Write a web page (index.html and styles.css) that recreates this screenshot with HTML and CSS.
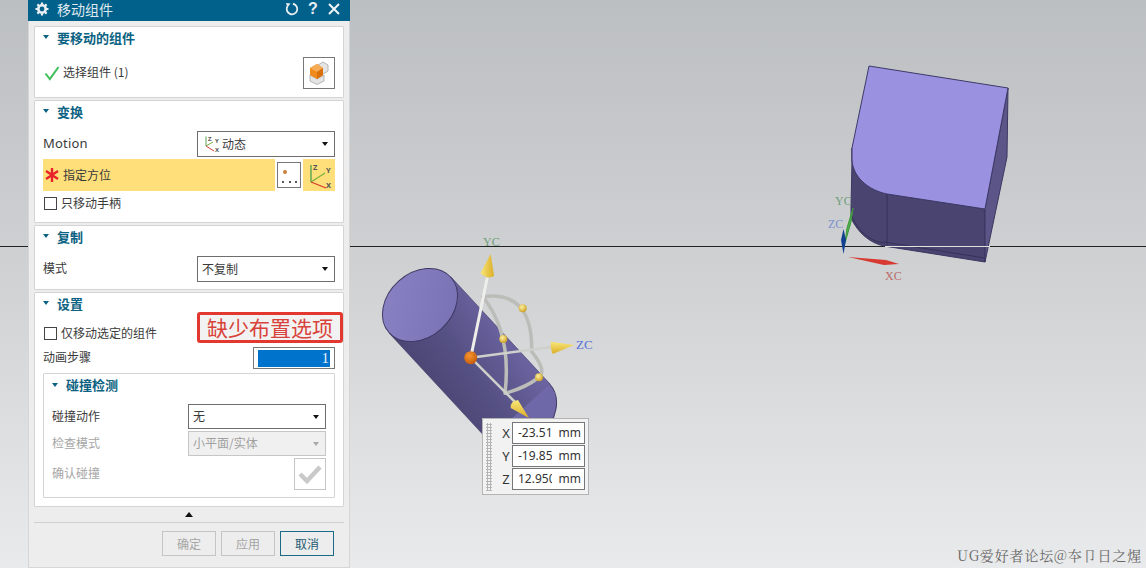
FILE: index.html
```html
<!DOCTYPE html>
<html lang="zh-CN">
<head>
<meta charset="utf-8">
<title>移动组件</title>
<link rel="stylesheet" href="styles.css">
</head>
<body>
<main class="stage">
  <svg class="scene" width="1146" height="568" viewBox="0 0 1146 568">
    <defs>
      <linearGradient id="cyl" gradientUnits="userSpaceOnUse" x1="410" y1="400" x2="520" y2="320">
        <stop offset="0" stop-color="#45406a"/><stop offset="0.5" stop-color="#565184"/><stop offset="1" stop-color="#7169aa"/>
      </linearGradient>
      <linearGradient id="capg" x1="0" y1="0" x2="1" y2="1">
        <stop offset="0" stop-color="#8a83c4"/><stop offset="1" stop-color="#7770b2"/>
      </linearGradient>
      <linearGradient id="coneV" x1="0" y1="0" x2="1" y2="0">
        <stop offset="0" stop-color="#f8e778"/><stop offset="1" stop-color="#dcae26"/>
      </linearGradient>
      <linearGradient id="coneH" x1="0" y1="0" x2="0" y2="1">
        <stop offset="0" stop-color="#f8e778"/><stop offset="1" stop-color="#dcae26"/>
      </linearGradient>
      <radialGradient id="ballY" cx="0.4" cy="0.35" r="0.7">
        <stop offset="0" stop-color="#fff2a0"/><stop offset="1" stop-color="#c99a1e"/>
      </radialGradient>
      <radialGradient id="ballO" cx="0.4" cy="0.35" r="0.7">
        <stop offset="0" stop-color="#f7962f"/><stop offset="1" stop-color="#c4590c"/>
      </radialGradient>
    </defs>
    <line class="horizon" x1="0" y1="246.5" x2="1146" y2="246.5"/>

    <path class="block-front" d="M852 148 V160 L851 207 V218 C858 233 870 243 884 246 L985 262 V209 L887 194 C868 190 854 178 852 160Z"/>
    <path class="block-right" d="M1008 88 L1007 157 L985 262 V209Z"/>
    <path class="block-top" d="M869 66 L1008 88 L985 209 L887 194 C868 190 853 177 852 160 V148Z"/>
    <path class="block-edge" d="M887 194 V245 M884 242 L985 258 M852 216 C858 232 870 241 884 243"/>
    <line class="glint" x1="885" y1="246.5" x2="990" y2="246.5"/>
    <path class="axis-green" d="M853 208 L851 222 L845 243 L847 228Z"/>
    <path class="axis-blue" d="M843.500 229 L846 240 L843.500 254 L841 240Z"/>
    <path class="axis-red" d="M848 257 L886 260 L899 264 L884 265Z"/>
    <text class="tri tri-y" x="835" y="205">YC</text>
    <text class="tri tri-z" x="828" y="228">ZC</text>
    <text class="tri tri-x" x="885" y="280">XC</text>

    <ellipse cx="519" cy="412" rx="41.500" ry="32" transform="rotate(-42 519 412)" fill="#6f68a8" class="cyl-edge"/>
    <path d="M451 277 L550 384 L488 440 L389 333Z" fill="url(#cyl)"/>
    <path class="cyl-line" d="M389 333 L488 440 M451 277 L550 384"/>
    <ellipse cx="420" cy="305" rx="41.500" ry="32" transform="rotate(-42 420 305)" fill="url(#capg)" class="cyl-edge"/>

    <g class="gizmo">
      <path class="g-arc" d="M482.700 296.700 Q533 290 531.700 351.700 M482.700 296.700 Q512 333 505 393.300 M531.700 351.700 Q548 372 538 378 Q525 388 505 393.300"/>
      <path class="g-axis" d="M470.700 357.700 L487 279"/>
      <path class="g-axis2" d="M470.700 357.700 L552 347 M470.700 357.700 L516 403"/>
    </g>
    <circle cx="522.700" cy="308.300" r="4" fill="url(#ballY)"/>
    <circle cx="503.300" cy="339" r="4" fill="url(#ballY)"/>
    <circle cx="539" cy="377.300" r="4" fill="url(#ballY)"/>
    <circle cx="470.700" cy="357.700" r="6.500" fill="url(#ballO)"/>
    <path d="M490.700 254 L494 276 Q487 280 480.500 273Z" fill="url(#coneV)"/>
    <path d="M574 345 L552.700 354 Q550 348 551 341.700Z" fill="url(#coneH)"/>
    <path d="M529 418 L510.700 408 Q510 401 518 400Z" fill="url(#coneH)"/>
    <text class="tri tri-y" x="483" y="246">YC</text>
    <text class="tri tri-zb" x="576" y="349">ZC</text>
  </svg>

  <section class="dialog">
    <header class="titlebar">
      <svg class="title-gear" width="14" height="14" viewBox="0 0 14 14"><circle cx="7" cy="7" r="3.700" fill="none" stroke="#e8eef2" stroke-width="2.600"/><path d="M7 .5V3M7 11v2.500M.5 7H3M11 7h2.500M2.400 2.400l1.800 1.800M9.800 9.800l1.800 1.800M2.400 11.600l1.800-1.800M9.800 4.200l1.800-1.800" stroke="#e8eef2" stroke-width="2.200"/></svg>
      <span class="title-text">移动组件</span>
      <span class="title-tools">
        <svg width="14" height="14" viewBox="0 0 14 14"><path d="M4 2.600 A5.300 5.300 0 1 0 10 2.600" transform="rotate(-25 7 7)" fill="none" stroke="#e8eef2" stroke-width="1.800"/><path d="M1 1 L5.500 1.500 L2.500 5.500Z" fill="#e8eef2"/></svg>
        <span class="title-q">?</span>
        <svg width="14" height="14" viewBox="0 0 14 14"><path d="M2 2L12 12M12 2L2 12" stroke="#f0f4f6" stroke-width="2"/></svg>
      </span>
    </header>

    <div class="sections">
      <section class="panel panel-select">
        <h2 class="panel-title"><i class="caret"></i>要移动的组件</h2>
        <div class="row row-pick">
          <svg class="mark" width="16" height="16" viewBox="0 0 16 16"><path d="M1.500 8.500 L5.800 14 L14.500 2" fill="none" stroke="#3fbf5a" stroke-width="2"/></svg>
          <span class="label">选择组件 (1)</span>
          <button class="icon-btn">
            <svg width="20" height="24" viewBox="0 0 20 24"><path d="M9 4 L14 1 L19 4 V10 L14 13 L9 10Z" fill="#e4e4e4" stroke="#b5b5b5"/><path d="M1 14 L8 18 L15 14 V20 L8 23.500 L1 20Z" fill="#e4e4e4" stroke="#b5b5b5"/><path d="M1 7 L8 3 L14 7 V14 L8 18 L1 14Z" fill="#f08a1d"/><path d="M1 7 L8 11 L14 7 L8 3Z" fill="#f6ab55"/><path d="M8 11 V18 L14 14 V7Z" fill="#d9700c"/></svg>
          </button>
        </div>
      </section>

      <section class="panel panel-transform">
        <h2 class="panel-title"><i class="caret"></i>变换</h2>
        <div class="row row-field">
          <span class="label label-latin">Motion</span>
          <div class="select select-wide">
            <svg class="axes-small" width="16" height="18" viewBox="0 0 16 18"><path d="M2 1.500 V11" stroke="#5aa05a" stroke-width="1"/><path d="M2 11 L9 7" stroke="#7ab03a" stroke-width="1"/><path d="M2 11 L10 16" stroke="#d04040" stroke-width="1"/><text class="axis-letter-s" x="4" y="6">Z</text><text class="axis-letter-s" x="11" y="8">Y</text><text class="axis-letter-s" x="11" y="17">X</text></svg>
            <span class="axes-letters">动态</span>
            <i class="arrow"></i>
          </div>
        </div>
        <div class="row row-orient">
          <div class="orient-bar">
            <svg class="asterisk" width="16" height="14" viewBox="0 0 16 14"><path d="M8 0V14M2 3L14 11M14 3L2 11" stroke="#e8232a" stroke-width="2.400"/></svg>
            <span class="label">指定方位</span>
          </div>
          <button class="dots-btn"><svg width="22" height="24" viewBox="0 0 22 24"><circle cx="7" cy="9" r="2" fill="#c9803b"/><circle cx="5" cy="19" r="1" fill="#222"/><circle cx="12" cy="19" r="1" fill="#222"/><circle cx="18" cy="19" r="1" fill="#222"/></svg></button>
          <div class="orient-icon">
            <svg width="28" height="28" viewBox="0 0 28 28"><path d="M6 4V21" stroke="#3f9a4a" stroke-width="1.200"/><path d="M6 21L20 12" stroke="#7ab03a" stroke-width="1.200"/><path d="M6 21L21 27" stroke="#d83a2a" stroke-width="1.300"/><text class="axis-letter" x="8" y="9">Z</text><text class="axis-letter" x="21" y="12">Y</text><text class="axis-letter" x="21" y="27">X</text></svg>
          </div>
        </div>
        <label class="row row-check"><i class="check"></i><span class="label">只移动手柄</span></label>
      </section>

      <section class="panel panel-copy">
        <h2 class="panel-title"><i class="caret"></i>复制</h2>
        <div class="row row-field">
          <span class="label">模式</span>
          <div class="select select-wide"><span>不复制</span><i class="arrow"></i></div>
        </div>
      </section>

      <section class="panel panel-settings">
        <h2 class="panel-title"><i class="caret"></i>设置</h2>
        <label class="row row-check row-only"><i class="check"></i><span class="label">仅移动选定的组件</span></label>
        <div class="row row-steps">
          <span class="label">动画步骤</span>
          <div class="num-input"><span class="num-sel">1</span></div>
        </div>
        <section class="group">
          <h3 class="panel-title group-title"><i class="caret"></i>碰撞检测</h3>
          <div class="row group-row">
            <span class="label">碰撞动作</span>
            <div class="select"><span>无</span><i class="arrow"></i></div>
          </div>
          <div class="row group-row group-row-off">
            <span class="label off">检查模式</span>
            <div class="select select-off"><span>小平面/实体</span><i class="arrow arrow-off"></i></div>
          </div>
          <div class="row group-row group-row-confirm">
            <span class="label off">确认碰撞</span>
            <button class="icon-btn icon-btn-off"><svg width="24" height="20" viewBox="0 0 24 20"><path d="M2 10 L9 17 L22 3" fill="none" stroke="#c9c9c9" stroke-width="4.500"/></svg></button>
          </div>
        </section>
      </section>
    </div>

    <div class="collapse"><i class="collapse-arrow"></i></div>
    <footer class="actions">
      <button class="btn btn-off">确定</button>
      <button class="btn btn-off">应用</button>
      <button class="btn btn-main">取消</button>
    </footer>
  </section>

  <div class="callout">缺少布置选项</div>

  <div class="coord-popup">
    <div class="grip"></div>
    <div class="coord-grid">
      <span class="coord-name">X</span><span class="coord-field"><b>-23.51</b><em>mm</em></span>
      <span class="coord-name">Y</span><span class="coord-field"><b>-19.85</b><em>mm</em></span>
      <span class="coord-name">Z</span><span class="coord-field"><b>12.950</b><em>mm</em></span>
    </div>
  </div>

  <div class="watermark">UG爱好者论坛@夲卩日之煋</div>
</main>
</body>
</html>
```
FILE: styles.css
```css
* { box-sizing: border-box; }
html, body { margin: 0; padding: 0; height: 100%; overflow: hidden; }
body { font-family: "Noto Sans CJK SC", "Noto Sans", sans-serif; font-size: 12px; color: #333; }
h2, h3 { margin: 0; }
button { padding: 0; font: inherit; }

.stage {
  position: relative;
  width: 1146px;
  height: 568px;
  overflow: hidden;
  background: linear-gradient(#bcbfc1 0, #d0d2d4 50%, #e9eaeb 100%);
}
.scene { position: absolute; left: 0; top: 0; }
.horizon { stroke: #222; stroke-width: 1; }
.glint { stroke: #e2e2dc; stroke-width: 1; }
.block-top { fill: #9a91e0; stroke: #3c3a68; stroke-width: 1; }
.block-front { fill: #4a4570; stroke: #3a3760; stroke-width: 1; }
.block-right { fill: #5b5687; stroke: #3a3760; stroke-width: 1; }
.block-edge { fill: none; stroke: #35325a; stroke-width: 1; }
.axis-green { fill: #4cae4c; stroke: #3f9a3f; stroke-width: 1; }
.axis-blue { fill: #123f8f; }
.axis-red { fill: #d83a32; }
.tri { font-family: "Liberation Serif", serif; font-size: 12px; }
.tri-y { fill: #6f9f7c; }
.tri-z { fill: #7b8fd0; }
.tri-zb { fill: #5571d8; font-size: 13px; }
.tri-x { fill: #b96a6a; }
.cyl-edge { stroke: #3e3a66; stroke-width: 1; }
.cyl-line { fill: none; stroke: #3e3a66; stroke-width: .6; }
.gizmo path { fill: none; stroke-linecap: round; }
.g-arc { stroke: #bcbdb9; stroke-width: 3.500; }
.g-axis { stroke: #eeeeea; stroke-width: 3; }
.g-axis2 { stroke: #cfd0cc; stroke-width: 2.500; }

.dialog {
  position: absolute;
  left: 28px;
  top: 0;
  width: 322px;
  height: 568px;
  background: #ededed;
  border-left: 1px solid #d6d6d6;
  border-right: 1px solid #d6d6d6;
  border-bottom: 1px solid #d6d6d6;
  display: flex;
  flex-direction: column;
}
.titlebar {
  height: 21px;
  margin: 0 -1px;
  background: #02618b;
  color: #dfe8ee;
  display: flex;
  align-items: center;
  padding: 0 9px 3px 7px;
  flex: none;
}
.title-gear { flex: none; }
.title-text { margin-left: 8px; font-size: 14px; line-height: 18px; }
.title-tools { margin-left: auto; display: flex; align-items: center; gap: 7px; }
.title-q { font: bold 16px/14px "Liberation Sans", sans-serif; width: 14px; text-align: center; color: #e8eef2; }

.sections {
  padding: 5px 5px 0;
  display: flex;
  flex-direction: column;
  gap: 2px;
  flex: none;
}
.panel {
  background: #fff;
  border: 1px solid #d4d4d4;
  border-radius: 1px;
  padding: 0 8px;
}
.panel-select { height: 72px; }
.panel-transform { height: 123px; }
.panel-copy { height: 65px; }
.panel-settings { height: 215px; }

.panel-title {
  display: flex;
  align-items: center;
  height: 22px;
  padding-bottom: 2px;
  font-size: 13px;
  font-weight: 700;
  color: #0c6282;
}
.caret {
  width: 0;
  height: 0;
  margin-right: 8px;
  border-left: 3.500px solid transparent;
  border-right: 3.500px solid transparent;
  border-top: 4px solid #0c6282;
  flex: none;
}
.row { display: flex; align-items: center; }
.label { font-size: 12px; line-height: 16px; padding-bottom: 2px; color: #3a3a3a; white-space: nowrap; }
.label-latin { font-family: "Noto Sans", sans-serif; font-size: 13px; letter-spacing: .2px; }
.off { color: #a6a6a6; }

.row-pick { height: 32px; margin-top: 8px; }
.row-pick .mark { margin-left: 1px; margin-right: 3px; }
.icon-btn {
  margin-left: auto;
  width: 32px;
  height: 32px;
  background: #fff;
  border: 1px solid #777;
  display: flex;
  align-items: center;
  justify-content: center;
}
.icon-btn-off { border-color: #c6c6c6; }

.row-field { justify-content: space-between; height: 26px; margin-top: 8px; }
.select {
  width: 138px;
  height: 25px;
  background: #fff;
  border: 1px solid #6e6e6e;
  display: flex;
  align-items: center;
  padding: 0 4px;
  font-size: 12px;
  color: #3a3a3a;
  flex: none;
}
.select span { padding-bottom: 2px; }
.select-wide { height: 26px; }
.axes-small { margin: 0 2px 0 2px; }
.axis-letter-s { font: 700 6px "Noto Sans", sans-serif; fill: #555; }
.arrow {
  margin-left: auto;
  margin-right: 2px;
  width: 0;
  height: 0;
  border-left: 3.500px solid transparent;
  border-right: 3.500px solid transparent;
  border-top: 4px solid #111;
}
.arrow-off { border-top-color: #a8a8a8; }
.select-off { background: #f0f0f0; border-color: #c6c6c6; color: #a0a0a0; }

.row-orient { height: 32px; margin-top: 2px; }
.orient-bar {
  width: 232px;
  height: 32px;
  background: #fedf7a;
  display: flex;
  align-items: center;
  padding-left: 1px;
}
.orient-bar .label { padding-bottom: 1px; }
.asterisk { margin-right: 3px; }
.dots-btn {
  width: 24px;
  height: 26px;
  margin-left: 2px;
  background: #fff;
  border: 1px solid #777;
  display: flex;
  align-items: center;
  justify-content: center;
}
.orient-icon {
  width: 32px;
  height: 32px;
  margin-left: 2px;
  background: #fedf7a;
  display: flex;
  align-items: center;
  justify-content: center;
}
.axis-letter { font: 700 7.500px "Noto Sans", sans-serif; fill: #555; }

.row-check { height: 16px; margin-top: 4px; }
.row-check .label { padding-bottom: 0; }
.check {
  width: 13px;
  height: 13px;
  margin: 0 4px 0 1px;
  background: #fff;
  border: 1px solid #444;
  flex: none;
}
.row-only { margin-top: 10px; }
.row-steps { justify-content: space-between; height: 22px; margin-top: 6px; }
.num-input {
  width: 82px;
  height: 22px;
  background: #fff;
  border: 1px solid #777;
  padding: 2px 4px;
}
.num-sel {
  display: block;
  height: 17px;
  background: #0073cc;
  color: #e6f0f8;
  text-align: right;
  font: 15px/17px "Liberation Serif", serif;
  padding-right: 1px;
}
.group {
  height: 125px;
  margin-top: 4px;
  border: 1px solid #d4d4d4;
  border-radius: 1px;
  padding: 0 8px;
}
.group-title { height: 23px; }
.group-row { justify-content: space-between; height: 25px; }
.group-row:first-of-type { margin-top: 7px; }
.group-row-off { margin-top: 2px; }
.group-row-confirm { height: 32px; margin-top: 2px; }

.collapse {
  height: 16px;
  margin: 0 5px;
  display: flex;
  align-items: center;
  justify-content: center;
  border-bottom: 1px solid #cfcfcf;
}
.collapse-arrow {
  width: 0;
  height: 0;
  border-left: 4.500px solid transparent;
  border-right: 4.500px solid transparent;
  border-bottom: 5px solid #111;
}
.actions {
  display: flex;
  justify-content: flex-end;
  gap: 5px;
  padding: 8px 15px 0 0;
}
.btn {
  width: 54px;
  height: 25px;
  background: #ededed;
  font-size: 12px;
  color: #444;
  border: 1px solid #02618b;
}
.btn-off { border-color: #c4c4c4; color: #a6a6a6; }
.btn-main { border-color: #1b6a86; color: #1e5a72; }

.callout {
  position: absolute;
  left: 197px;
  top: 312px;
  width: 146px;
  height: 31px;
  background: #f2f2f2;
  border: 3px solid #e2382f;
  border-radius: 3px;
  color: #d9423a;
  font-size: 21px;
  line-height: 25px;
  text-align: center;
  white-space: nowrap;
}

.coord-popup {
  position: absolute;
  left: 482px;
  top: 418px;
  width: 107px;
  height: 77px;
  background: #f2f2f2;
  border: 1px solid #b4b4b4;
  display: flex;
  padding: 3px;
}
.grip {
  width: 6px;
  margin-top: 1px;
  background-image: radial-gradient(#b5b5b5 1.200px, transparent 1.400px);
  background-size: 3px 3px;
}
.coord-grid {
  margin-left: auto;
  display: grid;
  grid-template-columns: 10px 73px;
  grid-auto-rows: 22px;
  row-gap: 1px;
  font: 13px/22px "Noto Sans", sans-serif;
  color: #333;
  text-align: center;
}
.coord-name { padding-right: 2px; }
.coord-field {
  background: #fff;
  border: 1px solid #777;
  display: flex;
  justify-content: space-between;
  align-items: center;
  padding: 0 3px 0 5px;
  font-size: 12px;
  line-height: 20px;
}
.coord-field b { font-weight: 400; width: 34px; overflow: hidden; text-align: left; white-space: nowrap; }
.coord-field em { font-style: normal; }

.watermark {
  position: absolute;
  right: 4px;
  bottom: 3px;
  font-family: "Noto Serif CJK SC", "Noto Sans CJK SC", serif;
  font-size: 14px;
  line-height: 20px;
  letter-spacing: .85px;
  color: #666;
}
```
